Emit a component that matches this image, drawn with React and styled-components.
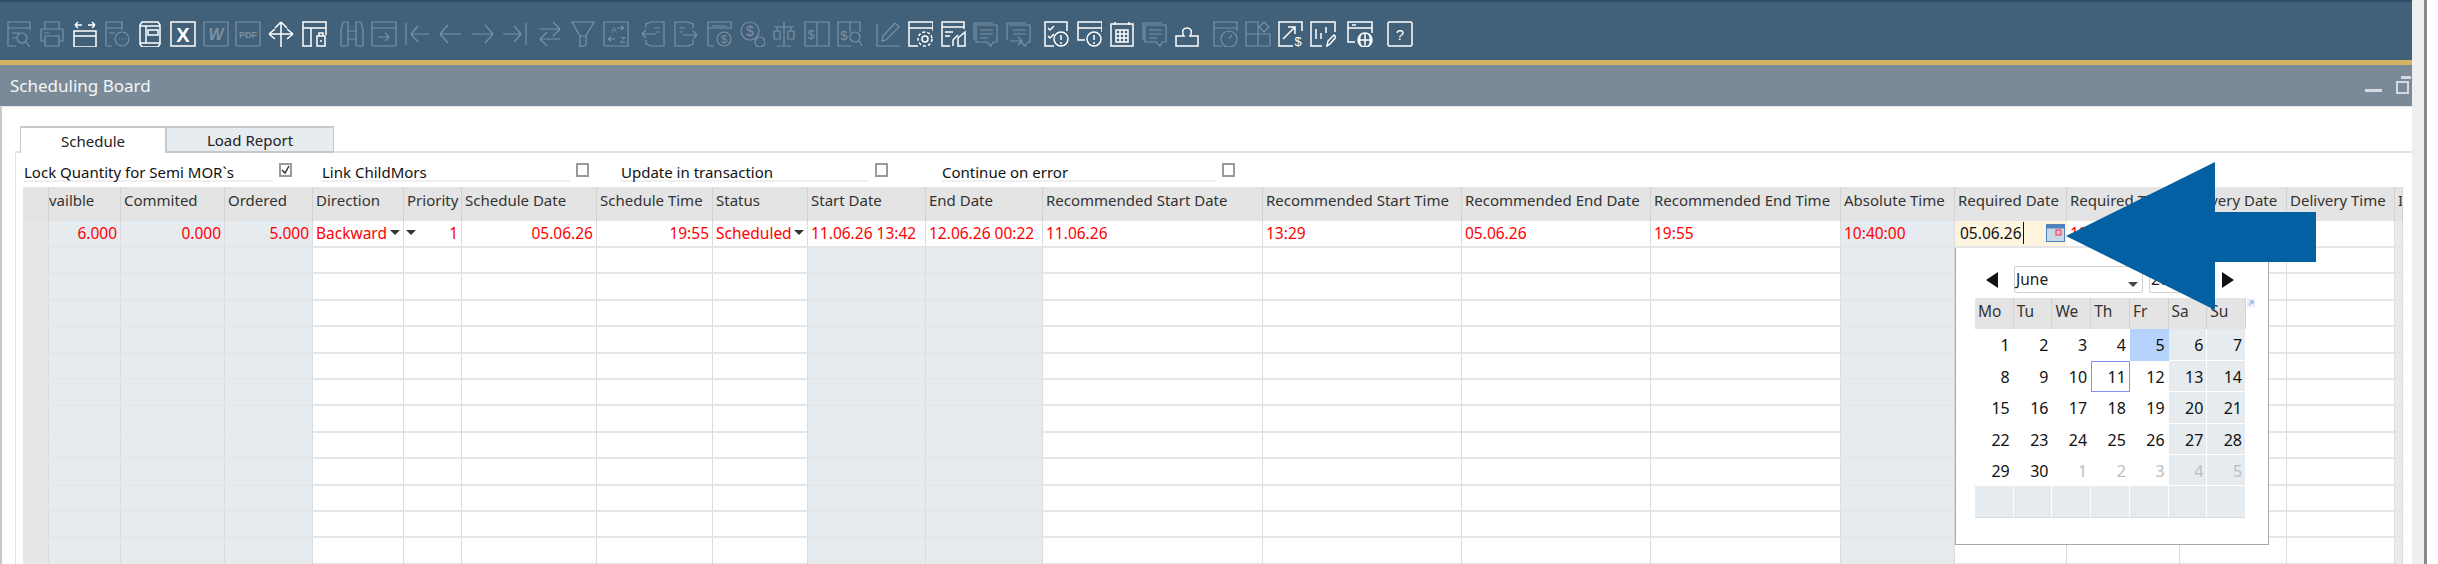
import React from 'react'
import styled, { createGlobalStyle } from 'styled-components'

const GlobalStyle = createGlobalStyle`
  html, body { margin: 0; padding: 0; background: #fff; }
  body { font-family: 'Noto Sans', 'Liberation Sans', sans-serif; font-size: 15px; color: #222; }
`

const Page = styled.div`
  position: relative;
  display: flex;
  width: 2438px;
  height: 564px;
  overflow: hidden;
`

const Main = styled.div`
  width: 2412px;
  display: flex;
  flex-direction: column;
`

const ScrollTrack = styled.div`
  width: 12px;
  background: #efefef;
  border-right: 3px solid #8a8a8a;
`

const Toolbar = styled.div`
  height: 58px;
  flex: none;
  display: flex;
  align-items: center;
  padding: 0 0 0 6px;
  background: #416079;
  border-top: 2px solid #2f4e6c;
`

const Glyph = styled.svg`
  width: 26px;
  height: 26px;
  flex: none;
  margin-right: 6.75px;
  margin-left: ${p => p.$gap || 0}px;
  margin-top: 5px;
  fill: none;
  stroke: currentColor;
  stroke-width: ${p => (p.$on ? 1.5 : 1.2)};
  color: ${p => (p.$on ? '#ffffff' : '#7b92a5')};
  text {
    fill: currentColor;
    stroke: none;
    font-family: 'Liberation Sans', sans-serif;
  }
`

const GoldLine = styled.div`
  height: 5px;
  flex: none;
  background: #d6b264;
`

const TitleBar = styled.div`
  height: 41px;
  flex: none;
  display: flex;
  align-items: center;
  justify-content: space-between;
  padding: 0 1px 0 10px;
  background: #7b8a99;
  border-bottom: 1px solid #dfe8ef;
  color: #f4f6f8;
  font-size: 17px;
`

const WindowButtons = styled.div`
  display: flex;
  align-items: flex-start;
  gap: 13px;
  svg { display: block; }
`

const Body = styled.div`
  flex: 1;
  min-height: 0;
  padding: 19px 0 0 13px;
  border-left: 2px solid #c9c9c9;
`

const Tabs = styled.div`
  display: flex;
  margin-left: 5px;
  margin-bottom: -2px;
  position: relative;
`

const Tab = styled.div`
  width: ${p => p.$w}px;
  height: 27px;
  box-sizing: border-box;
  display: flex;
  align-items: center;
  justify-content: center;
  font-size: 15px;
  color: #222;
  background: ${p => (p.$active ? '#fff' : '#e7ecf0')};
  border: 1px solid #c8c8c8;
  border-top-width: 2px;
  border-bottom: ${p => (p.$active ? 'none' : '2px solid #c8c8c8')};
`

const Panel = styled.div`
  border-top: 2px solid #e2e2e2;
  border-left: 1px solid #e2e2e2;
  padding: 10px 8px 0 7px;
`

const Options = styled.div`
  display: flex;
  height: 19px;
`

const Option = styled.div`
  width: ${p => p.$w}px;
  display: flex;
  gap: 6px;
`

const OptionLabel = styled.div`
  width: ${p => p.$label}px;
  box-sizing: border-box;
  height: 19px;
  line-height: 18px;
  padding-left: 1px;
  font-size: 15px;
  color: #111;
  border-bottom: 2px solid #efefef;
`

const CheckBox = styled.div`
  width: 13px;
  height: 14px;
  box-sizing: border-box;
  border: 2px solid #9a9a9a;
  color: #333;
  svg { display: block; }
`

const Grid = styled.div`
  position: relative;
  margin-top: 5px;
`

const Row = styled.div`
  display: grid;
  grid-template-columns: 26px 72px 104px 88px 91px 58px 135px 116px 95px 118px 117px 220px 199px 189px 190px 114px 112px 113px 107px 108px 8px;
  height: ${p => p.$h}px;
  box-sizing: border-box;
`

const HeadCell = styled.div`
  background: #e4e4e4;
  border-right: 1px solid #d2d2d2;
  padding: 3px 0 0 ${p => (p.$flush ? 0 : 3)}px;
  font-size: 15px;
  line-height: 20px;
  color: #333;
  white-space: nowrap;
  overflow: hidden;
`

const Cell = styled.div`
  position: relative;
  box-sizing: border-box;
  background: ${p => (p.$gutter ? '#e6e6e6' : p.$shade ? '#e6ebf0' : '#fff')};
  border-right: 1px solid #dcdcdc;
  border-bottom: 2px solid #e6e6e6;
  padding: 0 3px;
  text-align: ${p => (p.$right ? 'right' : 'left')};
  font-size: 15.5px;
  line-height: 25px;
  color: #f00;
  white-space: nowrap;
  overflow: hidden;
`

const DropMark = styled.span`
  position: absolute;
  top: 9px;
  ${p => (p.$left ? 'left: 2px;' : 'right: 3px;')}
  width: 0;
  height: 0;
  border-left: 5px solid transparent;
  border-right: 5px solid transparent;
  border-top: 5px solid #333;
`

const EditCell = styled.div`
  display: flex;
  align-items: center;
  justify-content: space-between;
  box-sizing: border-box;
  background: #fdf5df;
  border-bottom: 2px solid #e6e6e6;
  padding: 0 2px 2px 5px;
  font-size: 15.5px;
  color: #111;
`

const Caret = styled.span`
  border-right: 1px solid #111;
  padding-right: 1px;
`

const Calendar = styled.div`
  position: absolute;
  left: 1932px;
  top: 61px;
  width: 314px;
  height: 297px;
  box-sizing: border-box;
  background: #fff;
  border: 1px solid #a8a8a8;
  border-top: none;
  padding: 18px 0 0 19px;
`

const CalNav = styled.div`
  display: flex;
  align-items: center;
  height: 27px;
  padding-left: 11px;
`

const NavArrow = styled.span`
  width: 0;
  height: 0;
  border-top: 8px solid transparent;
  border-bottom: 8px solid transparent;
  ${p => (p.$next ? 'border-left: 12px solid #111;' : 'border-right: 12px solid #111;')}
  margin: ${p => p.$m};
`

const CalSelect = styled.div`
  position: relative;
  width: ${p => p.$w}px;
  height: 27px;
  box-sizing: border-box;
  border: 1px solid #cfcfcf;
  border-radius: 2px;
  padding-left: 1px;
  margin-right: 6px;
  font-size: 15.5px;
  line-height: 25px;
  color: #222;
  span {
    position: absolute;
    right: 4px;
    top: 15px;
    width: 0;
    height: 0;
    border-left: 5px solid transparent;
    border-right: 5px solid transparent;
    border-top: 5px solid #444;
  }
`

const CalGrid = styled.div`
  position: relative;
  display: grid;
  grid-template-columns: repeat(7, 38.72px);
  grid-auto-rows: 31.4px;
  width: 271px;
  margin-top: 5px;
`

const WeekDay = styled.div`
  height: 36px;
  box-sizing: border-box;
  background: #e4e4e4;
  border-right: 1px solid #d2d2d2;
  border-bottom: 1px solid #d2d2d2;
  padding: 1px 0 0 3px;
  margin-bottom: -5px;
  font-size: 15.5px;
  line-height: 24px;
  color: #333;
`

const Day = styled.div`
  box-sizing: border-box;
  background: ${p => (p.$selected ? '#b6d3fb' : p.$weekend ? '#e6ebf0' : '#fff')};
  border-right: 1px solid ${p => (p.$weekend ? '#fff' : 'transparent')};
  border-bottom: 1px solid ${p => (p.$weekend ? '#fff' : 'transparent')};
  outline: ${p => (p.$today ? '1px solid #8a8cf6' : 'none')};
  outline-offset: -1px;
  padding: 6px 3px 0 0;
  text-align: right;
  font-size: 16px;
  line-height: 20px;
  color: ${p => (p.$muted ? '#bdbdbd' : '#111')};
`

const EmptyDay = styled.div`
  background: #e6ebf0;
  border-right: 1px solid #fff;
  border-bottom: 1px solid #d8dde2;
`

const ExpandMark = styled.svg`
  position: absolute;
  right: -9px;
  top: 1px;
  width: 8px;
  height: 8px;
  background: #e6edf8;
`

const Callout = styled.svg`
  position: absolute;
  left: 2066px;
  top: 162px;
  width: 250px;
  height: 148px;
`

const icons = {
  docSearch: <><path d="M24 9V1H2v24h8M2 7h22M6 12h8M6 17h5" /><circle cx="16" cy="17" r="5" /><path d="M20 21l4 5" /></>,
  print: <><path d="M6 8V1h14v7M6 20H2V8h22v12h-4M6 15h14v10H6zM5 12h5" /></>,
  winArrows: <><path d="M2 10h22v16H2zM2 15h22M3 4h7M3 4l3-3M3 4l3 3M23 4h-7M23 4l-3-3M23 4l-3 3" /></>,
  docChat: <><path d="M18 9V1H2v24h6M2 7h16M5 12h6" /><circle cx="18" cy="18" r="7" /><path d="M15 18h1M18 18h1M21 18h1" /></>,
  book: <><path d="M5 1h16l2 3v19l-2 3H5l-2-3V4zM3 5h20M3 22h20M9 5v17M11 9h10v5H11z" /></>,
  excel: <><path d="M1 1h24v24H1z" /><text x="13" y="21" fontSize="20" fontWeight="700" textAnchor="middle">X</text></>,
  word: <><path d="M1 1h24v24H1z" /><text x="13" y="19" fontSize="16" fontWeight="700" fontStyle="italic" textAnchor="middle">W</text></>,
  pdf: <><path d="M1 1h24v24H1z" /><text x="13" y="17" fontSize="9" fontWeight="700" textAnchor="middle">PDF</text></>,
  move: <><path d="M13 1v25M13 1L7 7M13 1l6 6M1 13h24M1 13l6-5M1 13l6 5M25 13l-6-5M25 13l-6 5" /></>,
  winLock: <><path d="M11 25H2V1h23v13M2 7h23M10 7v18M16 15h8v10h-8zM18 15v-3h4v3" /><path d="M19 20h2" /></>,
  binoculars: <><path d="M2 9l2-8h5v24H2zM24 9l-2-8h-5v24h7zM9 10h8M9 18h8" /></>,
  winArrow: <><path d="M1 1h24v24H1zM1 7h24M7 16h11M14 12l4 4-4 4" /></>,
  first: <><path d="M2 2v22M7 13h18M7 13l7-8M7 13l7 8" /></>,
  prev: <><path d="M3 13h21M3 13l8-9M3 13l8 9" /></>,
  next: <><path d="M2 13h21M23 13l-8-9M23 13l-8 9" /></>,
  last: <><path d="M24 2v22M1 13h18M19 13l-7-8M19 13l-7 8" /></>,
  swap: <><path d="M3 8h20M23 8l-7-7M23 8l-7 7M3 18h20M3 18l7-7M3 18l7 7" /></>,
  funnel: <><path d="M2 1h22l-8 14v9l-6 2V15zM10 15h6" /></>,
  sort: <><path d="M1 1h24v24H1zM14 7h7M21 7l-3-2M21 7l-3 2M5 18h7M5 18l3-2M5 18l3 2" /><text x="8" y="12" fontSize="9">A</text><text x="17" y="22" fontSize="9">Z</text></>,
  docLeft: <><path d="M11 1h13v24H11M11 1L6 3v4M11 25l-5-2v-4M14 7h6M16 11h4M2 13h14M2 13l4-4M2 13l4 4" /></>,
  docRight: <><path d="M15 1H2v24h13M15 1l5 2v4M15 25l5-2v-4M6 7h6M6 11h4M10 14h14M24 14l-4-4M24 14l-4 4" /></>,
  docMoney: <><path d="M25 8V1H2v24h6M2 7h23M6 5h15" /><circle cx="18" cy="18" r="7" /><text x="18" y="22" fontSize="11" textAnchor="middle">$</text></>,
  coin: <><circle cx="11" cy="10" r="9" /><circle cx="21" cy="21" r="5" /><text x="11" y="15" fontSize="14" textAnchor="middle">$</text></>,
  scale: <><path d="M13 1v24M6 25h14M3 6h20M6 6v4M20 6v4M3 10h6v8H3zM17 10h6v8h-6z" /></>,
  panel: <><path d="M1 1h24v24H1zM13 1v24" /><text x="7" y="18" fontSize="13" textAnchor="middle">$</text></>,
  panelSearch: <><path d="M14 25H1V1h22v10M13 1v11" /><text x="7" y="19" fontSize="13" textAnchor="middle">$</text><circle cx="18" cy="16" r="5" /><path d="M22 20l3 5" /></>,
  pencil: <><path d="M1 25h24M2 3v22M7 20l1-5L20 2l4 4L11 19z" /></>,
  winGear: <><path d="M11 25H2V1h24v9M2 7h24" /><circle cx="18" cy="18" r="3" /><circle cx="18" cy="18" r="7" strokeDasharray="3 2" /></>,
  docTool: <><path d="M10 25H2V1h22v7M2 6h22M5 11h8M5 15h5M25 11l-7 6v8h7zM18 14l-5 5v6" /></>,
  chat: <><path d="M3 4h21v17h-4l-2 4-4-4H3zM7 9h13M7 13h13M7 17h8" /><path d="M1 19V2h19" /></>,
  chatArrow: <><path d="M3 4h21v17h-2l-3 4-4-4h-1M7 9h13M7 13h13M1 19V2h19M4 20h12M12 16l4 4-4 4" /></>,
  checkAlert: <><path d="M11 25H2V1h22v9M5 7l2 2 4-4M5 15l2 2 4-4" /><circle cx="18" cy="18" r="7" /><path d="M18 14v5M18 21v2" /></>,
  winAlert: <><path d="M9 19H2V1h24v10M2 7h24" /><circle cx="18" cy="18" r="7" /><path d="M18 14v5M18 21v2" /></>,
  calc: <><path d="M2 3h22v22H2zM6 1v3M20 1v3M7 9h12v12H7zM7 13h12M7 17h12M11 9v12M15 9v12" /></>,
  stamp: <><path d="M9 13c-3-8 11-8 8 0l-1 2h8v10H2V15h8z" /></>,
  gauge: <><path d="M10 25H2V1h23v9M2 7h23" /><circle cx="17" cy="18" r="8" /><path d="M17 18l3-4" /></>,
  shapes: <><path d="M1 1h12v24H1zM1 13h24v12H13M19 1l5 5-5 5-5-5z" /></>,
  chartMoney: <><path d="M24 10V1H1v24h14M5 18l12-12M10 6h7v7" /><text x="20" y="25" fontSize="13" textAnchor="middle">$</text></>,
  chartPen: <><path d="M12 25H1V1h24v10M6 8v10M11 12v6M16 6v6M17 25l1-5 6-6 2 2-6 7z" /></>,
  winGlobe: <><path d="M8 21H1V1h24v11M1 7h24M5 4h4" /><circle cx="18" cy="19" r="7" /><path d="M11 19h14M18 12v14M14 13c-2 4-2 8 0 12M22 13c2 4 2 8 0 12" /></>,
  help: <><path d="M2 1h22l1 1v22l-1 1H2l-1-1V2z" /><text x="13" y="19" fontSize="15" textAnchor="middle">?</text></>,
}

const toolbarItems = [
  ['docSearch'], ['print'], ['winArrows', 1], ['docChat'], ['book', 1], ['excel', 1], ['word'], ['pdf'], ['move', 1], ['winLock', 1],
  ['binoculars', 0, 5], ['winArrow'], ['first'], ['prev'], ['next'], ['last'], ['swap', 0, 2], ['funnel'], ['sort'],
  ['docLeft', 0, 5], ['docRight'], ['docMoney'], ['coin'], ['scale'], ['panel'], ['panelSearch'],
  ['pencil', 0, 5], ['winGear', 1], ['docTool', 1], ['chat'], ['chatArrow'],
  ['checkAlert', 1, 5], ['winAlert', 1], ['calc', 1], ['chat'], ['stamp', 1],
  ['gauge', 0, 5], ['shapes'], ['chartMoney', 1], ['chartPen', 1], ['winGlobe', 1, 4], ['help', 1, 7],
]

const headers = [
  '', 'vailble', 'Commited', 'Ordered', 'Direction', 'Priority', 'Schedule Date', 'Schedule Time', 'Status',
  'Start Date', 'End Date', 'Recommended Start Date', 'Recommended Start Time', 'Recommended End Date',
  'Recommended End Time', 'Absolute Time', 'Required Date', 'Required Time', 'Delivery Date', 'Delivery Time', 'I',
]

const shaded = [1, 2, 3, 9, 10, 15, 20]

const firstRow = {
  1: { text: '6.000', right: true },
  2: { text: '0.000', right: true },
  3: { text: '5.000', right: true },
  4: { text: 'Backward', drop: 'right' },
  5: { text: '1', right: true, drop: 'left' },
  6: { text: '05.06.26', right: true },
  7: { text: '19:55', right: true },
  8: { text: 'Scheduled', drop: 'right' },
  9: { text: '11.06.26 13:42' },
  10: { text: '12.06.26 00:22' },
  11: { text: '11.06.26' },
  12: { text: '13:29' },
  13: { text: '05.06.26' },
  14: { text: '19:55' },
  15: { text: '10:40:00' },
  17: { text: '19:55' },
}

const weekDays = ['Mo', 'Tu', 'We', 'Th', 'Fr', 'Sa', 'Su']

const calendarDays = [
  ...Array.from({ length: 30 }, (_, i) => ({ n: i + 1 })),
  ...[1, 2, 3, 4, 5].map(n => ({ n, muted: true })),
]

const options = [
  { label: 'Lock Quantity for Semi MOR`s', w: 298, lw: 250, checked: true },
  { label: 'Link ChildMors', w: 299, lw: 249 },
  { label: 'Update in transaction', w: 321, lw: 249 },
  { label: 'Continue on error', w: 300, lw: 275 },
]

const FirstRow = () => (
  <Row $h={27}>
    {headers.map((_, i) => {
      if (i === 16) {
        return (
          <EditCell key={i}>
            <Caret>05.06.26</Caret>
            <svg width="19" height="18" viewBox="0 0 19 18">
              <rect x="0.5" y="0.5" width="18" height="17" fill="#c9d9ec" stroke="#4f81bd" />
              <rect x="0.5" y="0.5" width="18" height="4" fill="#4f81bd" />
              <rect x="10" y="6" width="5" height="5" fill="#fbd" stroke="#e33" />
            </svg>
          </EditCell>
        )
      }
      const c = firstRow[i] || {}
      return (
        <Cell key={i} $gutter={i === 0} $shade={[1, 2, 3, 15, 20].includes(i)} $right={c.right}>
          {c.text}
          {c.drop && <DropMark $left={c.drop === 'left'} />}
        </Cell>
      )
    })}
  </Row>
)

const EmptyRow = () => (
  <Row $h={26.4}>
    {headers.map((_, i) => (
      <Cell key={i} $gutter={i === 0} $shade={shaded.includes(i)} />
    ))}
  </Row>
)

const App = () => (
  <Page>
    <GlobalStyle />
    <Main>
      <Toolbar>
        {toolbarItems.map(([name, on, gap], i) => (
          <Glyph key={i} viewBox="0 0 26 26" $on={on} $gap={gap}>
            {icons[name]}
          </Glyph>
        ))}
      </Toolbar>
      <GoldLine />
      <TitleBar>
        Scheduling Board
        <WindowButtons>
          <svg width="19" height="30" viewBox="0 0 19 30">
            <rect x="1" y="18" width="17" height="3" fill="#d5dae0" />
          </svg>
          <svg width="15" height="30" viewBox="0 0 15 30">
            <rect x="5" y="5" width="10" height="3" fill="#d5dae0" />
            <rect x="1" y="11" width="11" height="11" fill="none" stroke="#d5dae0" strokeWidth="2" />
          </svg>
        </WindowButtons>
      </TitleBar>
      <Body>
        <Tabs>
          <Tab $w={146} $active>Schedule</Tab>
          <Tab $w={168}>Load Report</Tab>
        </Tabs>
        <Panel>
          <Options>
            {options.map(o => (
              <Option key={o.label} $w={o.w}>
                <OptionLabel $label={o.lw}>{o.label}</OptionLabel>
                <CheckBox>
                  {o.checked && (
                    <svg width="9" height="10" viewBox="0 0 9 10">
                      <path d="M1 5l3 3 4-7" fill="none" stroke="#333" strokeWidth="1.5" />
                    </svg>
                  )}
                </CheckBox>
              </Option>
            ))}
          </Options>
          <Grid>
            <Row $h={34}>
              {headers.map((h, i) => (
                <HeadCell key={i} $flush={i === 1}>{h}</HeadCell>
              ))}
            </Row>
            <FirstRow />
            {Array.from({ length: 12 }, (_, i) => <EmptyRow key={i} />)}
            <Calendar>
              <CalNav>
                <NavArrow $m="0 16px 0 0" />
                <CalSelect $w={129}>June<span /></CalSelect>
                <CalSelect $w={56}>2026</CalSelect>
                <NavArrow $next $m="0 0 0 11px" />
              </CalNav>
              <CalGrid>
                {weekDays.map(d => <WeekDay key={d}>{d}</WeekDay>)}
                {calendarDays.map((d, i) => (
                  <Day
                    key={i}
                    $weekend={i % 7 >= 5}
                    $muted={d.muted}
                    $selected={i === 4}
                    $today={i === 10}
                  >
                    {d.n}
                  </Day>
                ))}
                {weekDays.map(d => <EmptyDay key={d} />)}
                <ExpandMark viewBox="0 0 8 8">
                  <path d="M2 6l4-4M3 2h3v3" fill="none" stroke="#7ea4d6" />
                </ExpandMark>
              </CalGrid>
            </Calendar>
          </Grid>
        </Panel>
      </Body>
    </Main>
    <ScrollTrack />
    <Callout viewBox="0 0 250 148">
      <path d="M0 74L149 0v50h101v50H149v48z" fill="#0360a3" />
    </Callout>
  </Page>
)

export default App
